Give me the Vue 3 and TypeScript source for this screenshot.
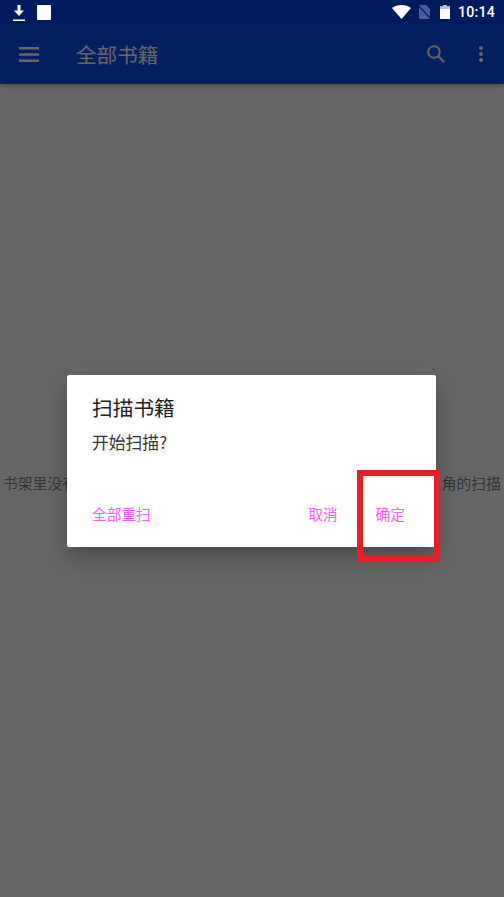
<template>
  <div class="page">
    <div class="status-bar">
      <div class="status-left">
        <svg class="ic-download" width="12" height="16" viewBox="0 0 12 16">
          <path d="M4.500 0h3v5.500H11L6 11 1 5.500h3.500z" fill="#fff" />
          <rect y="14.500" width="12" height="1.500" fill="#fff" />
        </svg>
        <div class="square"></div>
      </div>
      <div class="status-right">
        <svg width="19" height="14" viewBox="0 0 19 14">
          <path d="M0 3C2.500 1 5.700 0 9.500 0S16.500 1 19 3L9.500 14z" fill="#fff" />
        </svg>
        <svg class="ic-sim" width="13" height="14" viewBox="0 0 13 14">
          <path d="M1 0h7l4 4v10H1z" fill="#4a5c9c" />
          <path d="M0 0l13 14" stroke="#001a5e" stroke-width="1.200" />
        </svg>
        <svg class="ic-battery" width="10" height="14" viewBox="0 0 10 14">
          <path d="M3 0h4v1.500h3V14H0V1.500h3z" fill="#fff" />
          <path d="M3 0h4v1.500h3V4H0V1.500h3z" fill="#b8c0d8" />
        </svg>
        <span class="time">10:14</span>
      </div>
    </div>
    <div class="toolbar">
      <svg class="ic-menu" width="20" height="15" viewBox="0 0 20 15">
        <path d="M0 1.200h20M0 7.500h20M0 13.800h20" stroke="#fff" stroke-width="2.400" />
      </svg>
      <span class="title">全部书籍</span>
      <svg class="ic-search" width="18" height="18" viewBox="0 0 18 18">
        <circle cx="7" cy="7" r="5.800" fill="none" stroke="#fff" stroke-width="2" />
        <path d="M11 11l6.300 6.300" stroke="#fff" stroke-width="2" />
      </svg>
      <svg class="ic-more" width="6" height="18" viewBox="0 0 6 18">
        <circle cx="3" cy="3" r="2" fill="#fff" />
        <circle cx="3" cy="9" r="2" fill="#fff" />
        <circle cx="3" cy="15" r="2" fill="#fff" />
      </svg>
    </div>
    <div class="content">
      <p class="empty">书架里没有书籍,请先添加书籍到书架当中,也可以点击手机屏幕右上角的扫描</p>
    </div>

    <div class="scrim">
      <div class="dialog">
        <div class="dialog-title">扫描书籍</div>
        <div class="dialog-body">开始扫描?</div>
        <div class="dialog-actions">
          <span class="btn">全部重扫</span>
          <span class="btn cancel">取消</span>
          <span class="btn ok">确定<i class="highlight"></i></span>
        </div>
      </div>
    </div>
  </div>
</template>

<script setup lang="ts"></script>

<style>
html,
body {
  margin: 0;
  background: #fff;
}
</style>

<style scoped>
.page {
  position: relative;
  display: flex;
  flex-direction: column;
  width: 504px;
  height: 897px;
  overflow: hidden;
  font-family: "Noto Sans CJK SC", "Liberation Sans", sans-serif;
  background: #fff;
}
.status-bar {
  position: relative;
  z-index: 2;
  display: flex;
  justify-content: space-between;
  align-items: center;
  height: 24px;
  padding: 0 9px 0 13px;
  background: #001a5e;
}
.status-left,
.status-right {
  display: flex;
  align-items: center;
}
.status-left {
  gap: 12px;
}
.ic-download {
  margin-top: 2px;
}
.square {
  width: 14px;
  height: 15px;
  background: #fff;
  border-radius: 1px;
}
.ic-sim {
  margin-left: 7px;
}
.ic-battery {
  margin-left: 9px;
}
.time {
  margin-left: 8px;
  color: #fff;
  font-family: Roboto, "Liberation Sans", sans-serif;
  font-size: 14.200px;
  font-weight: 500;
  letter-spacing: 0.2px;
}
.toolbar {
  display: flex;
  align-items: center;
  height: 60px;
  padding: 0 20px 0 19px;
  background: #0550f0;
  box-shadow: 0 2px 4px rgba(0, 0, 0, 0.3);
}
.title {
  flex: 1;
  margin-left: 37px;
  color: #fff;
  font-size: 20.600px;
}
.ic-more {
  margin-left: 33px;
}
.content {
  flex: 1;
  display: flex;
  align-items: center;
  justify-content: center;
  padding-bottom: 16px;
}
.empty {
  margin: 0;
  color: #808080;
  font-size: 14.700px;
  letter-spacing: 0.150px;
  white-space: nowrap;
}
.scrim {
  position: absolute;
  inset: 0;
  display: flex;
  align-items: center;
  justify-content: center;
  background: rgba(0, 0, 0, 0.6);
}
.dialog {
  box-sizing: border-box;
  width: 369px;
  height: 172px;
  display: flex;
  flex-direction: column;
  margin: 25px 1px 0 0;
  padding: 18px 31px 0 25px;
  background: #fff;
  border-radius: 2px;
  box-shadow: 0 11px 22px rgba(0, 0, 0, 0.28);
}
.dialog-title {
  color: #212121;
  font-size: 20.700px;
  line-height: 28px;
}
.dialog-body {
  margin-top: 8px;
  color: #333;
  font-size: 16.800px;
  line-height: 26px;
}
.dialog-actions {
  display: flex;
  align-items: center;
  margin-top: 49px;
}
.btn {
  color: #ff5cf8;
  font-size: 14.700px;
  line-height: 20px;
}
.cancel {
  margin-left: auto;
}
.ok {
  position: relative;
  margin-left: 38px;
}
.highlight {
  position: absolute;
  left: -19px;
  top: -34px;
  box-sizing: border-box;
  width: 83px;
  height: 92px;
  border: 6px solid #ed1c24;
}
</style>
